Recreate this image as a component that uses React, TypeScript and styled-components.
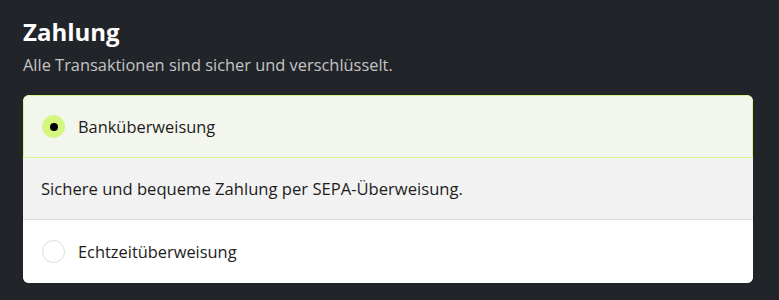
import styled, { createGlobalStyle } from "styled-components";

const GlobalStyle = createGlobalStyle`
    html, body {
        margin: 0;
        padding: 0;
        background-color: #212428;
        font-family: "Open Sans", "Noto Sans", sans-serif;
    }
`;

const Page = styled.div`
    width: 779px;
    height: 300px;
    padding: 16px 26px 0 23px;
    box-sizing: border-box;
    background-color: #212428;
`;

const Heading = styled.h2`
    margin: 0;
    color: #ffffff;
    font-size: 24px;
    font-weight: 700;
    line-height: 32px;
`;

const Subtitle = styled.p`
    margin: 5px 0 18px;
    color: #c4c4c6;
    font-size: 16.4px;
    line-height: 24px;
`;

const Card = styled.div`
    background: #ffffff;
    border-radius: 6px;
    overflow: hidden;
`;

const Option = styled.label<{ selected?: boolean }>`
    display: flex;
    align-items: center;
    gap: 13px;
    height: 63px;
    padding: 0 18px;
    box-sizing: border-box;
    background: ${(p) => (p.selected ? "#f3f6ec" : "#ffffff")};
    border: 1px solid ${(p) => (p.selected ? "#d5f58f" : "transparent")};
    border-radius: ${(p) => (p.selected ? "6px 6px 0 0" : "0")};
    color: #1c1c1c;
    font-size: 16.4px;
    cursor: pointer;
`;

const Radio = styled.span<{ checked?: boolean }>`
    width: 23px;
    height: 23px;
    flex: none;
    border-radius: 50%;
    box-sizing: border-box;
    display: flex;
    align-items: center;
    justify-content: center;
    background: ${(p) => (p.checked ? "#d4f77f" : "#ffffff")};
    border: 1px solid ${(p) => (p.checked ? "#d4f77f" : "#dcdcdc")};
    &::after {
        content: "";
        display: ${(p) => (p.checked ? "block" : "none")};
        width: 8px;
        height: 8px;
        border-radius: 50%;
        background: #000000;
    }
`;

const Details = styled.div`
    height: 62px;
    display: flex;
    align-items: center;
    padding: 0 18px;
    background: #f2f2f2;
    border-bottom: 1px solid #dcdcdc;
    box-sizing: border-box;
    color: #1c1c1c;
    font-size: 16.6px;
`;

const App: React.FC = () => {
    return (
        <>
            <GlobalStyle />
            <Page>
                <Heading>Zahlung</Heading>
                <Subtitle>Alle Transaktionen sind sicher und verschlüsselt.</Subtitle>
                <Card>
                    <Option selected>
                        <Radio checked />
                        Banküberweisung
                    </Option>
                    <Details>Sichere und bequeme Zahlung per SEPA-Überweisung.</Details>
                    <Option>
                        <Radio />
                        Echtzeitüberweisung
                    </Option>
                </Card>
            </Page>
        </>
    );
};

export default App;
